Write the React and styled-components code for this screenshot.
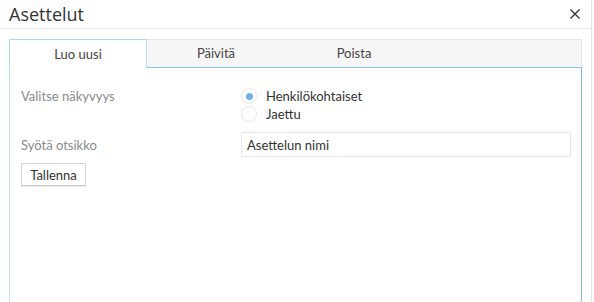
import React, { useState } from "react";
import styled, { createGlobalStyle } from "styled-components";

const Global = createGlobalStyle`
  html, body { margin: 0; padding: 0; background: #fff; }
  body { font-family: Lato, "Open Sans", sans-serif; }
  * { box-sizing: border-box; }
`;

const Dialog = styled.div`
  width: 592px;
  height: 302px;
  border-right: 1px solid #e4e4e4;
  display: flex;
  flex-direction: column;
  overflow: hidden;
`;

const Header = styled.div`
  height: 29px;
  flex: none;
  display: flex;
  align-items: center;
  justify-content: space-between;
  padding: 0 10px 1px 9px;
  border-bottom: 1px solid #ebebeb;
`;

const Title = styled.h1`
  margin: 0;
  font-family: "Open Sans", sans-serif;
  font-weight: 400;
  font-size: 18px;
  color: #333;
  line-height: 24px;
`;

const Close = styled.button`
  border: 0;
  background: none;
  padding: 0;
  width: 12px;
  height: 12px;
  display: flex;
  cursor: pointer;
`;

const Body = styled.div`
  flex: 1;
  display: flex;
  flex-direction: column;
  padding: 10px 9px 0 9px;
`;

const TabList = styled.div`
  display: flex;
  height: 28px;
  background: #f6f6f6;
  border-top: 1px solid #e6e6e6;
  border-right: 1px solid #e6e6e6;
  position: relative;
  z-index: 1;
`;

const Tab = styled.button`
  width: 138px;
  height: ${(p) => (p.$active ? "29px" : "27px")};
  margin-top: -1px;
  border: 1px solid ${(p) => (p.$active ? "#b5d6f3" : "transparent")};
  border-bottom: 0;
  background: ${(p) => (p.$active ? "#fff" : "transparent")};
  font-family: Lato, sans-serif;
  font-size: 13px;
  color: #444;
  padding: 0;
  cursor: pointer;
`;

const Panel = styled.div`
  flex: 1;
  border-top: 1px solid #8cbfec;
  border-left: 1px solid #bddcf6;
  border-right: 1px solid #7fb7ea;
  padding: 19px 10px 0 11px;
  display: flex;
  flex-direction: column;
`;

const Row = styled.div`
  display: flex;
  align-items: ${(p) => p.$align || "center"};
  margin-bottom: ${(p) => p.$gap || 0}px;
`;

const Label = styled.div`
  width: 220px;
  flex: none;
  font-size: 13px;
  line-height: 18px;
  color: #8a8a8a;
`;

const RadioGroup = styled.div`
  display: flex;
  flex-direction: column;
`;

const RadioItem = styled.label`
  display: flex;
  align-items: center;
  height: 18px;
  font-size: 13px;
  color: #333;
  cursor: pointer;
`;

const Circle = styled.span`
  width: 16px;
  height: 16px;
  border-radius: 50%;
  border: 1px solid #e8e8e8;
  background: #fff;
  margin-right: 9px;
  display: flex;
  align-items: center;
  justify-content: center;
  &::after {
    content: "";
    width: 7px;
    height: 7px;
    border-radius: 50%;
    background: ${(p) => (p.$checked ? "#6db0ec" : "transparent")};
  }
`;

const Input = styled.input`
  flex: 1;
  height: 25px;
  border: 1px solid #e6e6e6;
  border-radius: 1px;
  padding: 0 5px;
  font-family: Lato, sans-serif;
  font-size: 13px;
  color: #333;
  outline: none;
`;

const Button = styled.button`
  align-self: flex-start;
  width: 65px;
  height: 23px;
  background: #fff;
  border: 1px solid #d6d6d6;
  border-bottom-color: #c8c8c8;
  box-shadow: 0 1px 0 #ececec;
  font-family: Lato, sans-serif;
  font-size: 13px;
  color: #333;
  padding: 0;
  cursor: pointer;
`;

export default function App() {
  const [tab, setTab] = useState(0);
  const [vis, setVis] = useState(0);
  const tabs = ["Luo uusi", "Päivitä", "Poista"];
  return (
    <>
      <Global />
      <Dialog>
        <Header>
          <Title>Asettelut</Title>
          <Close aria-label="Sulje">
            <svg width="12" height="12" viewBox="0 0 12 12">
              <path d="M1.5 1.5 L10.5 10.5 M10.5 1.5 L1.5 10.5" stroke="#333" strokeWidth="1.4" fill="none" />
            </svg>
          </Close>
        </Header>
        <Body>
          <TabList>
            {tabs.map((t, i) => (
              <Tab key={t} $active={tab === i} onClick={() => setTab(i)}>
                {t}
              </Tab>
            ))}
          </TabList>
          <Panel>
            <Row $align="flex-start" $gap={9}>
              <Label>Valitse näkyvyys</Label>
              <RadioGroup>
                {["Henkilökohtaiset", "Jaettu"].map((r, i) => (
                  <RadioItem key={r} onClick={() => setVis(i)}>
                    <Circle $checked={vis === i} />
                    {r}
                  </RadioItem>
                ))}
              </RadioGroup>
            </Row>
            <Row $gap={6}>
              <Label>Syötä otsikko</Label>
              <Input defaultValue="Asettelun nimi" />
            </Row>
            <Button>Tallenna</Button>
          </Panel>
        </Body>
      </Dialog>
    </>
  );
}
